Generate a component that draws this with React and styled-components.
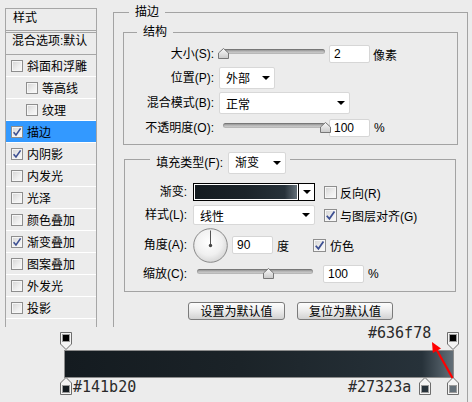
import React from 'react';
import styled, { createGlobalStyle } from 'styled-components';

const GlobalStyle = createGlobalStyle`
  html, body {
    margin: 0;
    padding: 0;
    background: #ececec;
  }
  body {
    font-family: "Liberation Sans", "Noto Sans CJK SC", sans-serif;
    font-size: 12px;
    color: #000;
  }
`;

const Page = styled('div')`
  width: 472px;
  height: 402px;
  overflow: hidden;
  background: #ececec;
`;

const Dialog = styled('div')`
  display: flex;
  align-items: flex-start;
  height: 327px;
`;

/* left list of effects */
const Sidebar = styled('div')`
  margin: 8px 0 0 5px;
  width: 92px;
  height: 319px;
  box-sizing: border-box;
  border: 1px solid #a6a6a6;
  border-bottom: none;
  display: flex;
  flex-direction: column;
  flex: none;
`;

const SideHead = styled('div')`
  height: 21px;
  line-height: 18px;
  padding-left: 7px;
  border-bottom: 1px solid #a6a6a6;
`;

const SideBlend = styled('div')`
  margin-top: 1px;
  height: 21px;
  line-height: 17px;
  padding-left: 6px;
  border-top: 1px solid #a6a6a6;
  border-bottom: 1px solid #a6a6a6;
  white-space: nowrap;
`;

const SideItem = styled('div')`
  height: 21px;
  display: flex;
  align-items: center;
  gap: 4px;
  padding-left: ${(p) => (p.$sub ? 20 : 5)}px;
  border-bottom: 1px solid #fff;
  background: ${(p) => (p.$active ? '#3399ff' : 'transparent')};
  white-space: nowrap;
`;

const Box = styled('span')`
  width: ${(p) => p.$size}px;
  height: ${(p) => p.$size}px;
  box-sizing: border-box;
  border: 1px solid #8e8e8e;
  background: linear-gradient(135deg, #d4d4d4 0%, #efefef 60%, #fafafa 100%);
  box-shadow: inset 0 0 0 1px #f6f6f6;
  display: inline-flex;
  align-items: center;
  justify-content: center;
  flex: none;
  margin-left: ${(p) => p.$ml || 0}px;
`;

const Check = ({ on, size = 12, ml }) => (
  <Box $size={size} $ml={ml}>
    {on && (
      <svg width={size - 2} height={size - 2} viewBox="0 0 10 10">
        <path d="M1.6 5.2 L4 8 L8.6 1.4" fill="none" stroke="#3c4f92" strokeWidth="1.6" />
      </svg>
    )}
  </Box>
);

/* right side */
const Main = styled('div')`
  margin: 4px 0 0 16px;
  flex: none;
`;

const Group = styled('fieldset')`
  margin: ${(p) => p.$m};
  padding: 0;
  min-width: 0;
  box-sizing: border-box;
  border: 1px solid #a3a3a3;
  ${(p) => p.$w && `width: ${p.$w}px;`}
  ${(p) => p.$h && `height: ${p.$h}px;`}
  ${(p) => p.$open && 'border-bottom: none;'}
`;

const Legend = styled('legend')`
  margin-left: ${(p) => p.$x}px;
  padding: 0 ${(p) => p.$px}px;
  height: ${(p) => p.$h}px;
  line-height: 16px;
  display: flex;
  align-items: flex-start;
  gap: 5px;
  white-space: nowrap;
`;

const Rows = styled('div')`
  padding: ${(p) => p.$pad};
`;

const Row = styled('div')`
  display: flex;
  align-items: center;
  height: ${(p) => p.$h}px;
  white-space: nowrap;
`;

const Label = styled('span')`
  flex: none;
  width: ${(p) => p.$w}px;
  margin-right: ${(p) => p.$gap}px;
  text-align: right;
  line-height: ${(p) => p.$lh || 16}px;
`;

const Text = styled('span')`
  margin-left: ${(p) => p.$ml || 0}px;
  flex: none;
`;

const SelectBox = styled('div')`
  width: ${(p) => p.$w}px;
  height: ${(p) => p.$h}px;
  box-sizing: border-box;
  background: #fff;
  border: 1px solid #d8d8d8;
  border-radius: 2px;
  display: flex;
  align-items: center;
  justify-content: space-between;
  padding: 0 4px 0 6px;
  flex: none;
`;

const Caret = styled('span')`
  width: 0;
  height: 0;
  border-left: ${(p) => p.$s || 4}px solid transparent;
  border-right: ${(p) => p.$s || 4}px solid transparent;
  border-top: ${(p) => p.$s || 4}px solid #000;
`;

const Select = ({ w, h = 22, children }) => (
  <SelectBox $w={w} $h={h}>
    <span>{children}</span>
    <Caret />
  </SelectBox>
);

const Field = styled('input')`
  width: ${(p) => p.$w}px;
  height: 18px;
  box-sizing: border-box;
  margin: 0 0 0 ${(p) => p.$ml || 0}px;
  padding: 0 0 0 4px;
  border: 1px solid #d6d6d6;
  border-radius: 2px;
  background: #fff;
  font-family: "Liberation Sans", sans-serif;
  font-size: 12px;
  color: #000;
  outline: none;
  flex: none;
`;

const SliderBox = styled('div')`
  position: relative;
  width: ${(p) => p.$w}px;
  height: 12px;
  padding: 1px 0 0 4px;
  box-sizing: border-box;
  flex: none;
`;

const Track = styled('div')`
  height: 5px;
  border-radius: 3px;
  background: linear-gradient(#7c7c7c, #b4b4b4 45%, #d9d9d9);
  box-shadow: inset 0 0 0 1px rgba(0, 0, 0, 0.12);
`;

const Thumb = styled('svg')`
  position: absolute;
  top: 0;
`;

const Slider = ({ w, value }) => {
  const track = w - 4;
  return (
    <SliderBox $w={w}>
      <Track />
      <Thumb width="11" height="11" viewBox="0 0 11 11" style={{ left: 4 + value * track - 5.5 }}>
        <defs>
          <linearGradient id="thumbg" x1="0" y1="0" x2="0" y2="1">
            <stop offset="0" stopColor="#fafafa" />
            <stop offset="1" stopColor="#c9c9c9" />
          </linearGradient>
        </defs>
        <path d="M5.5 0.5 L10.5 5 V10.5 H0.5 V5 Z" fill="url(#thumbg)" stroke="#777" />
      </Thumb>
    </SliderBox>
  );
};

const Swatch = styled('div')`
  width: 122px;
  height: 18px;
  box-sizing: border-box;
  border: 1px solid #000;
  background: #fff;
  display: flex;
  flex: none;
`;

const SwatchFill = styled('div')`
  flex: 1;
  margin: 1px;
  background: linear-gradient(to right, #141b20 0%, #1c242a 50%, #27323a 88%, #636f78 100%);
`;

const SwatchBtn = styled('div')`
  width: 15px;
  border-left: 1px solid #000;
  display: flex;
  align-items: center;
  justify-content: center;
`;

const DialSvg = styled('svg')`
  flex: none;
`;

const Dial = () => (
  <DialSvg width="35" height="35" viewBox="0 0 35 35">
    <defs>
      <radialGradient id="dialg" cx="0.45" cy="0.4" r="0.65">
        <stop offset="0" stopColor="#ffffff" />
        <stop offset="0.6" stopColor="#f0f0f0" />
        <stop offset="1" stopColor="#d2d2d2" />
      </radialGradient>
    </defs>
    <circle cx="17.5" cy="17.5" r="16.8" fill="url(#dialg)" stroke="#8a8a8a" />
    <line x1="17.5" y1="17.5" x2="17.5" y2="2.5" stroke="#555" strokeWidth="1" />
    <circle cx="17.5" cy="17.5" r="1.7" fill="#444" />
  </DialSvg>
);

const Buttons = styled('div')`
  display: flex;
  justify-content: center;
  gap: 12px;
  margin-top: 10px;
`;

const Btn = styled('button')`
  width: ${(p) => p.$w}px;
  height: 18px;
  padding: 0;
  border: 1px solid #7b7b7b;
  border-radius: 3px;
  background: linear-gradient(#fdfdfd, #ececec 50%, #d2d2d2);
  font-family: "Noto Sans CJK SC", sans-serif;
  font-size: 12px;
  line-height: 16px;
  color: #000;
`;

/* gradient annotation under the dialog */
const Annot = styled('div')`
  position: relative;
  width: 468px;
  height: 75px;
  padding-top: 23px;
  box-sizing: border-box;
  border-right: 1px solid #a3a3a3;
`;

const Bar = styled('div')`
  margin-left: 64px;
  width: 390px;
  height: 28px;
  box-sizing: border-box;
  border: 1px solid #8c8c8c;
  background: linear-gradient(to right, #141b20 0%, #1b2328 45%, #27323a 92%, #636f78 100%);
`;

const Marker = styled('svg')`
  position: absolute;
`;

const Hex = styled('span')`
  position: absolute;
  font-family: "DejaVu Sans Mono", "Liberation Mono", monospace;
  font-size: 15px;
  line-height: 17px;
  color: #2a2a2a;
`;

const Stop = ({ x, y, up, color }) => (
  <Marker width="12" height="18" viewBox="0 0 12 18" style={{ left: x, top: y }}>
    {up ? (
      <>
        <path d="M6 0.5 L11.5 6 V17.5 H0.5 V6 Z" fill="#f4f4f4" stroke="#6d6d6d" />
        <rect x="2.5" y="8.5" width="7" height="7" fill={color} stroke="#9a9a9a" />
      </>
    ) : (
      <>
        <path d="M0.5 0.5 H11.5 V12 L6 17.5 L0.5 12 Z" fill="#f4f4f4" stroke="#6d6d6d" />
        <rect x="2.5" y="2.5" width="7" height="7" fill={color} stroke="#9a9a9a" />
      </>
    )}
  </Marker>
);

const layers = [
  { name: '斜面和浮雕' },
  { name: '等高线', sub: true },
  { name: '纹理', sub: true },
  { name: '描边', on: true, active: true },
  { name: '内阴影', on: true },
  { name: '内发光' },
  { name: '光泽' },
  { name: '颜色叠加' },
  { name: '渐变叠加', on: true },
  { name: '图案叠加' },
  { name: '外发光' },
  { name: '投影' },
];

const stops = [
  { x: 60, y: 5, color: '#000' },
  { x: 447, y: 5, color: '#000' },
  { x: 60, y: 50, color: '#141b20', up: true },
  { x: 419, y: 50, color: '#27323a', up: true },
  { x: 447, y: 50, color: '#636f78', up: true },
];

const hexes = [
  { text: '#636f78', x: 368, y: -2 },
  { text: '#141b20', x: 73, y: 52 },
  { text: '#27323a', x: 348, y: 52 },
];

export default function App() {
  return (
    <Page>
      <GlobalStyle />
      <Dialog>
        <Sidebar>
          <SideHead>样式</SideHead>
          <SideBlend>混合选项:默认</SideBlend>
          {layers.map((l) => (
            <SideItem key={l.name} $sub={l.sub} $active={l.active}>
              <Check on={l.on} />
              <span>{l.name}</span>
            </SideItem>
          ))}
        </Sidebar>

        <Main>
          <Group $w={355} $h={323} $m="0" $open>
            <Legend $x={15} $px={6} $h={16}>描边</Legend>

            <Group $m="4px 9px 0 9px">
              <Legend $x={13} $px={6} $h={16}>结构</Legend>
              <Rows $pad="3px 0 5px 0">
                <Row $h={22}>
                  <Label $w={90} $gap={5}>大小(S):</Label>
                  <Slider w={106} value={0} />
                  <Field $w={41} $ml={4} readOnly value="2" />
                  <Text $ml={3}>像素</Text>
                </Row>
                <Row $h={25}>
                  <Label $w={90} $gap={5}>位置(P):</Label>
                  <Select w={56}>外部</Select>
                </Row>
                <Row $h={26}>
                  <Label $w={90} $gap={5}>混合模式(B):</Label>
                  <Select w={131}>正常</Select>
                </Row>
                <Row $h={23}>
                  <Label $w={90} $gap={5}>不透明度(O):</Label>
                  <Slider w={106} value={1} />
                  <Field $w={41} $ml={4} readOnly value="100" />
                  <Text $ml={4}>%</Text>
                </Row>
              </Rows>
            </Group>

            <Group $m="7px 11px 0 10px">
              <Legend $x={25} $px={4} $h={14}>
                <Label $w={69} $gap={0} $lh={22}>填充类型(F):</Label>
                <Select w={58}>渐变</Select>
              </Legend>
              <Rows $pad="15px 0 6px 0">
                <Row $h={22}>
                  <Label $w={62} $gap={6}>渐变:</Label>
                  <Swatch>
                    <SwatchFill />
                    <SwatchBtn>
                      <Caret $s={4} />
                    </SwatchBtn>
                  </Swatch>
                  <Check size={13} ml={9} />
                  <Text $ml={3}>反向(R)</Text>
                </Row>
                <Row $h={24}>
                  <Label $w={62} $gap={6}>样式(L):</Label>
                  <Select w={122} h={20}>线性</Select>
                  <Check size={13} ml={9} on />
                  <Text $ml={3}>与图层对齐(G)</Text>
                </Row>
                <Row $h={36}>
                  <Label $w={62} $gap={6}>角度(A):</Label>
                  <Dial />
                  <Field $w={41} $ml={4} readOnly value="90" />
                  <Text $ml={4}>度</Text>
                  <Check size={13} ml={24} on />
                  <Text $ml={4}>仿色</Text>
                </Row>
                <Row $h={22}>
                  <Label $w={62} $gap={6}>缩放(C):</Label>
                  <Slider w={120} value={0.62} />
                  <Field $w={41} $ml={10} readOnly value="100" />
                  <Text $ml={4}>%</Text>
                </Row>
              </Rows>
            </Group>

            <Buttons>
              <Btn $w={97}>设置为默认值</Btn>
              <Btn $w={96}>复位为默认值</Btn>
            </Buttons>
          </Group>
        </Main>
      </Dialog>

      <Annot>
        <Bar />
        {stops.map((s) => (
          <Stop key={`${s.x}-${s.y}`} {...s} />
        ))}
        {hexes.map((h) => (
          <Hex key={h.text} style={{ left: h.x, top: h.y }}>{h.text}</Hex>
        ))}
        <Marker width="32" height="45" viewBox="0 0 32 45" style={{ left: 425, top: 10 }}>
          <line x1="27.5" y1="41" x2="12" y2="13.5" stroke="#ff0000" strokeWidth="2.2" />
          <path d="M7 5 L16 11.4 L7.8 16 Z" fill="#ff0000" />
        </Marker>
      </Annot>
    </Page>
  );
}
